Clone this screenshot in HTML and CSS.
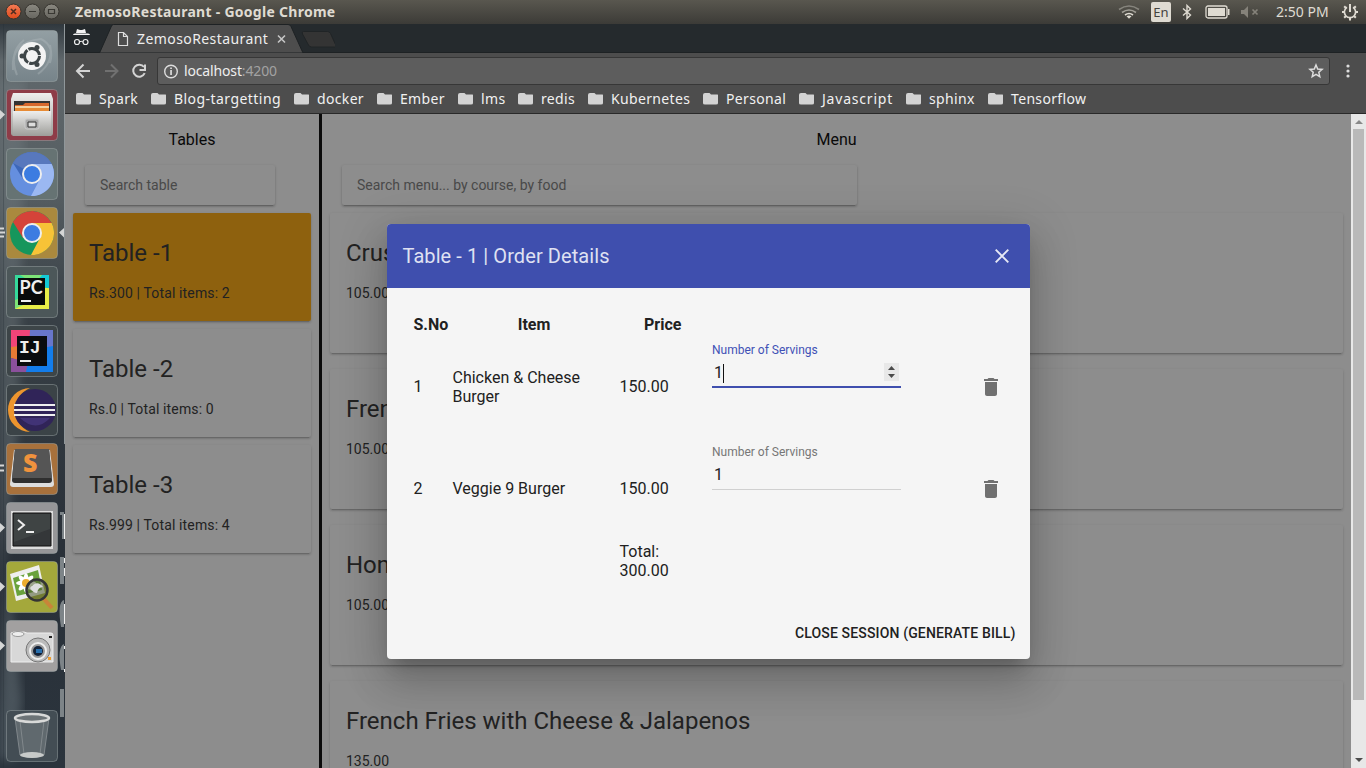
FILE: index.html
```html
<!DOCTYPE html>
<html lang="en">
<head>
<meta charset="utf-8">
<title>ZemosoRestaurant</title>
<link rel="stylesheet" href="styles.css">
</head>
<body>
<header class="system-bar">
  <svg class="window-buttons" width="65" height="24" viewBox="0 0 65 24">
    <defs><linearGradient id="red" x2="0" y2="1"><stop stop-color="#f47c55"/><stop offset="1" stop-color="#df4a1b"/></linearGradient><linearGradient id="gray" x2="0" y2="1"><stop stop-color="#8b8981"/><stop offset="1" stop-color="#66655f"/></linearGradient></defs>
    <circle cx="13.5" cy="11.5" r="7.500" fill="url(#red)" stroke="#35332e"/><circle cx="32.5" cy="11.5" r="7.500" fill="url(#gray)" stroke="#35332e"/><circle cx="51.5" cy="11.5" r="7.500" fill="url(#gray)" stroke="#35332e"/>
    <path d="m11 9 5 5m0-5-5 5" stroke="#502d20" stroke-width="1.6"/><path d="M29 11.5h7M48.5 9.5h6v4h-6z" stroke="#393833" stroke-width="1.2" fill="none"/>
  </svg>
  <span class="window-title">ZemosoRestaurant - Google Chrome</span>
  <div class="indicators">
    <svg width="22" height="24" viewBox="0 0 22 24" fill="none" stroke-width="1.6"><path d="M1 9.5q10-7 20 0" stroke="#86847d"/><path d="M4 12.5q7-5 14 0" stroke="#a09e96"/><path d="M7 15q4-3 8 0" stroke="#dfdbd2"/><path d="m8.500 16.200 2.500 2.500 2.500-2.500q-2.500-1.600-5 0" fill="#dfdbd2" stroke="none"/></svg>
    <span class="lang">En</span>
    <svg class="bluetooth" width="10" height="16" viewBox="0 0 10 16" fill="none" stroke="#dfdbd2" stroke-width="1.4"><path d="m1 4.500 7.500 6.500L5 14.500v-13L8.500 5 1 11.500"/></svg>
    <svg class="battery" width="25" height="14" viewBox="0 0 25 14"><rect x="1" y="1" width="21" height="12" rx="2" fill="none" stroke="#dfdbd2" stroke-width="1.3"/><path fill="#dfdbd2" d="M3 3h17v8H3zM23 4h1.500v6H23z"/></svg>
    <svg class="muted" width="18" height="14" viewBox="0 0 18 14" fill="#85827a"><path d="M0 5h3l4-4v12L3 9H0z"/><path d="m11.500 4.500 5 5m0-5-5 5" stroke="#85827a" stroke-width="1.700"/></svg>
    <span class="clock">2:50 PM</span>
    <svg class="power" width="18" height="18" viewBox="0 0 18 18" fill="none" stroke="#dfdbd2"><path d="M6 4.300a5.600 5.600 0 1 0 6 0" stroke-width="1.600"/><path d="M9 1v8" stroke-width="2"/><path d="M9 15v2.500M1 9h2.500M14.500 9H17M3.200 3.200l2 2M14.800 3.200l-2 2M3.200 14.800l2-2M14.800 14.800l-2-2" stroke-width="2"/></svg>
  </div>
</header>
<div class="workspace">
  <nav class="launcher">
    <svg class="wallpaper" width="65" height="744" viewBox="0 24 65 744">
      <defs><linearGradient id="wall" x2="0" y2="1"><stop stop-color="#30383e"/><stop offset=".05" stop-color="#60686c"/><stop offset=".23" stop-color="#555d61"/><stop offset=".38" stop-color="#394147"/><stop offset=".7" stop-color="#293038"/><stop offset="1" stop-color="#2b343d"/></linearGradient><filter id="blur"><feGaussianBlur stdDeviation="5"/></filter></defs>
      <path fill="url(#wall)" d="M0 24h65v744H0z"/><path d="M0 80h25L18 430 4 560 0 600z" fill="#768084" opacity=".4" filter="url(#blur)"/><path d="M7 570 22 700 15 760H0v-40z" fill="#78858b" opacity=".4" filter="url(#blur)"/>
      <path d="M3.500 24v744" stroke="#252e34" stroke-opacity=".3"/><path d="M64.500 24v420" stroke="#90979a"/><path d="M60 512h4v27h-2v-24h-2zM60 557h4v27h-4zM64 600q-7 2-3 27h3M64 644q-7 3-3 26h3M60 689h4v28h-4z" fill="#7d8488"/><path d="M64.500 514v25M64.500 558v5m0 5v8M64.500 604v20m0 22v3m0 20v3" stroke="#eee"/>
      <path d="m0 110 5 4.500-5 5zM0 523l5 4.500-5 5zM0 582l5 4.500-5 5zM0 641l5 4.500-5 5zM64 228l-5 4.500 5 5z" fill="#d5d6d6"/><path d="M0 228.500h4M0 232.500h5M0 236.500h4M0 465.500h4M0 470.500h4" stroke="#d5d6d6" stroke-width="2"/>
    </svg>
    <div class="tiles">
      <svg class="tile" viewBox="0 0 52 52"><defs><linearGradient id="glass" x2="0" y2="1"><stop stop-color="#939fa3"/><stop offset="1" stop-color="#77848a"/></linearGradient><linearGradient id="paper" x2="0" y2="1"><stop stop-color="#eee"/><stop offset="1" stop-color="#9d9d99"/></linearGradient></defs><rect class="plate" fill="url(#glass)" width="51" height="51" x=".5" y=".5" rx="4"/><path d="M7 40Q4 12 35 9q14 7 9 24M11 45q-9-22 7-35M44 15q4 17-12 29" fill="none" stroke="#b6c1c4" stroke-width="2" opacity=".35"/><circle cx="26" cy="26" r="14" fill="#f3f3f3"/><circle cx="26" cy="26" r="7.500" fill="none" stroke="#3e4547" stroke-width="3" stroke-dasharray="14.500 1.200"/><g fill="#3e4547"><circle cx="16" cy="26" r="2.500"/><circle cx="31" cy="17.500" r="2.500"/><circle cx="31" cy="34.500" r="2.500"/></g></svg>
      <svg class="tile" viewBox="0 0 52 52"><rect class="plate" fill="#8e3c48" width="51" height="51" x=".5" y=".5" rx="4"/><path d="M7 4h38l2 6v34q0 3-3 3H8q-3 0-3-3V10z" fill="url(#paper)"/><path d="M8 12h36v13H8z" fill="#333"/><path d="M9 16h8l2-2h24v8H9z" fill="#d7682d"/><path d="M9 17h34v3H9z" fill="#f4d2a1"/><path d="M9 19h34v3H9z" fill="#e78b36"/><path d="M7 22h38v25H7z" fill="url(#paper)"/><rect x="19" y="30" width="14" height="10" rx="2" fill="#aaa" stroke="#ccc"/><path d="M22 33h8v5h-8z" fill="#ddd" stroke="#333"/></svg>
      <svg class="tile" viewBox="0 0 52 52"><rect class="plate" fill="#667373" width="51" height="51" x=".5" y=".5" rx="4"/><circle cx="26" cy="26" r="22" fill="#658fdf"/><path d="M26 16H45.600A22 22 0 0 0 7 15L17 31z" fill="#3d67b9"/><path d="M26 16H45.600A22 22 0 0 1 25 48L34 31z" fill="#9bb8f2"/><path d="M7 15A22 22 0 0 1 45.600 16H26Q20 17 18 21z" fill="#5878bd"/><circle cx="26" cy="26" r="9" fill="#3c7ce1" stroke="#eee" stroke-width="2"/></svg>
      <svg class="tile" viewBox="0 0 52 52"><rect class="plate" fill="#aa893e" width="51" height="51" x=".5" y=".5" rx="4"/><circle cx="26" cy="26" r="22" fill="#16965c"/><path d="M26 16H45.600A22 22 0 0 0 7 15L17 31z" fill="#d54339"/><path d="M26 16H45.600A22 22 0 0 1 25 48L34 31z" fill="#f7c337"/><circle cx="26" cy="26" r="9" fill="#3c7ce1" stroke="#eee" stroke-width="2"/></svg>
      <svg class="tile" viewBox="0 0 52 52"><rect class="plate" fill="#4c5759" width="51" height="51" x=".5" y=".5" rx="4"/><path d="M9 9h34v34H9z" fill="#35d99b"/><path d="M14 9h29v8H27zM9 34l16-6v15H9z" fill="#7de477"/><path d="M36 9h7v14L31 15z" fill="#13c9d6"/><path d="M38 22h5v21H9l20-10z" fill="#e8ee47"/><path d="M12 12h27v27H12z" fill="#080b0b"/><text x="13.500" y="27.500" class="logo-pc">PC</text><path d="M15 34h10v2H15z" fill="#eee"/></svg>
      <svg class="tile" viewBox="0 0 52 52"><rect class="plate" fill="#3d4548" width="51" height="51" x=".5" y=".5" rx="4"/><path d="M5 5h23v15L5 25z" fill="#f04478"/><path d="M5 22l15-2v18L5 33z" fill="#e77b34"/><path d="M5 33l18 4v10H5z" fill="#8b509c"/><path d="M24 5h23v42L23 20z" fill="#6876ca"/><path d="M31 24l16-3v26H20l3-15z" fill="#137deb"/><path d="M11 11h30v30H11z" fill="#0a0c0e"/><text x="13" y="28" class="logo-ij">IJ</text><path d="M14 35h11v2H14z" fill="#eee"/></svg>
      <svg class="tile" viewBox="0 0 52 52"><rect class="plate" fill="#3b4347" width="51" height="51" x=".5" y=".5" rx="4"/><path d="M24 4A22 22 0 1 0 24 48Q10 42 10 26T24 4" fill="#ed952e"/><circle cx="29" cy="26" r="21" fill="#302458"/><path d="M8 21h41M8 26h41M8 31h41" stroke="#eee" stroke-width="2"/><path d="M14 34h30q-14 15-30 0" fill="#493b83" opacity=".7"/></svg>
      <svg class="tile" viewBox="0 0 52 52"><rect class="plate" fill="#a8713c" width="51" height="51" x=".5" y=".5" rx="4"/><path d="M8 7h36l4 34q0 3-3 3H7q-3 0-3-3z" fill="#ddd"/><path d="M9 6h34l3 31q0 3-3 3H9q-3 0-3-3z" fill="#2f2f2f"/><path d="M9 6h34l3 29H6z" fill="#555"/><text x="17" y="29" class="logo-s">S</text></svg>
      <svg class="tile" viewBox="0 0 52 52"><rect class="plate" fill="#969698" width="51" height="51" x=".5" y=".5" rx="4"/><path d="M5 9h42v38H5z" fill="#ddd"/><path d="M7 11h38v33H7z" fill="#343739" stroke="#111"/><path d="M8 12h36v15L8 40z" fill="#484c4d" opacity=".6"/><path d="m12 18 6 5-6 5M20 30h8" fill="none" stroke="#eee" stroke-width="2"/></svg>
      <svg class="tile" viewBox="0 0 52 52"><rect class="plate" fill="#a4a83b" width="51" height="51" x=".5" y=".5" rx="4"/><path d="m4 13 29-9 6 28-29 8z" fill="#eee"/><path d="m7 17 25-8 4 20-25 6z" fill="#69a23c"/><g fill="#fff"><ellipse cx="20" cy="22" rx="3" ry="10"/><ellipse cx="20" cy="22" rx="10" ry="3"/><ellipse cx="20" cy="22" rx="3" ry="10" transform="rotate(45 20 22)"/><ellipse cx="20" cy="22" rx="3" ry="10" transform="rotate(-45 20 22)"/></g><circle cx="20" cy="22" r="4" fill="#edac2e"/><path d="m37 37 9 10" stroke="#c98439" stroke-width="4"/><circle cx="31" cy="29" r="10.500" fill="#4b572c" fill-opacity=".55" stroke="#343434" stroke-width="2.500"/><path d="M24 27q7-9 13-1-5 0-6 6-4 0-7-5" fill="#ddd"/></svg>
      <svg class="tile" viewBox="0 0 52 52"><rect class="plate" fill="#a2a0a0" width="51" height="51" x=".5" y=".5" rx="4"/><path d="M8 12h10l3 1h24q2 0 2 2v27H5V13z" fill="#d8d8d8" stroke="#eee"/><ellipse cx="12" cy="14" rx="6" ry="2.500" fill="#eee" stroke="#999"/><circle cx="32" cy="30" r="12" fill="#bbb" stroke="#777"/><circle cx="32" cy="31" r="8" fill="#999" stroke="#eee" stroke-width="2"/><circle cx="32" cy="31" r="5" fill="#142238"/><path d="M30 29h6v4h-6z" fill="#286fad"/><path d="M43 16h3v2h-3z" fill="#222"/><path d="M42 37h3v3h-3z" fill="#ef9d2c"/></svg>
      <svg class="tile trash" viewBox="0 0 52 52"><rect class="plate" fill="#434d54" width="51" height="51" x=".5" y=".5" rx="4"/><path d="M9 8h34l-5 37q-12 5-24 0z" fill="#6d757a" opacity=".7" stroke="#999fa2"/><path d="M14 11 18 44M38 11l-4 33" stroke="#b1b5b7" opacity=".4"/><ellipse cx="26" cy="8" rx="17" ry="4" fill="#6c7376" stroke="#d8d9d8" stroke-width="2.500"/><ellipse cx="26" cy="45" rx="12" ry="3" fill="#c7cac9"/></svg>
    </div>
  </nav>
  <section class="browser">
    <div class="tab-strip">
      <svg width="270" height="29" viewBox="65 24 270 29"><path d="m99.500 53 12-27q.5-1.500 2-1.500H288q2 0 3 2L303 53z" fill="#4d4d4d" stroke="#1e2224"/><path d="M303.500 31.500h24q2 0 3 2l5 11q1 2.500-1 2.500h-23q-2 0-3-2l-6-11q-1-2.500 1-2.500" fill="#343434" stroke="#202426"/><g fill="#f3f3f3"><path d="m77 29 3 1 2 0 3-1 1 4H76zM73 35q0-1.500 2-1.500h13q2 0 2 1.500z"/></g><path d="M79.500 42q1.500-1.500 3.500 0" fill="none" stroke="#eee"/><circle cx="77" cy="42" r="2.500" fill="none" stroke="#eee" stroke-width="1.200"/><circle cx="85.500" cy="42" r="2.500" fill="none" stroke="#eee" stroke-width="1.200"/><path d="M118.500 32.500h5l4 4v9h-9zM123.500 32.500v4h4" fill="none" stroke="#ddd" stroke-width="1.200"/><path d="m278 35.500 7 7m0-7-7 7" stroke="#c5c5c5" stroke-width="1.600"/></svg>
      <span class="tab-title">ZemosoRestaurant</span>
    </div>
    <div class="toolbar">
      <svg class="nav-icons" width="92" height="36" viewBox="65 53 92 36" fill="none" stroke-width="2"><path d="M90 71H77.500m6-6.500L77 71l6.500 6.500" stroke="#d3d3d3"/><path d="M105 71h12m-6-6.500 6.500 6.500-6.500 6.500" stroke="#707070"/><path d="M144 67a6 6 0 1 0 .7 6.200M145 64.500v5.500h-5.500" stroke="#d3d3d3"/></svg>
      <div class="address"><svg width="15" height="15" viewBox="0 0 15 15"><circle cx="7" cy="7.500" r="6.300" fill="none" stroke="#ddd" stroke-width="1.400"/><path d="M6.200 6h1.700v5H6.200zM6.200 3.500h1.700v1.600H6.200z" fill="#ddd"/></svg><span class="url">localhost<span>:4200</span></span><svg class="star" width="16" height="16" viewBox="0 0 16 16"><path d="m8 2 1.700 4 4.400.4-3.300 2.900 1 4.300L8 11.300l-3.800 2.300 1-4.300-3.300-2.900 4.400-.4z" fill="none" stroke="#ddd" stroke-width="1.500"/></svg></div>
      <svg class="more" width="4" height="14" viewBox="0 0 4 14" fill="#ddd"><circle cx="2" cy="2" r="1.600"/><circle cx="2" cy="7" r="1.600"/><circle cx="2" cy="12" r="1.600"/></svg>
    </div>
    <div class="bookmarks">
      <a>Spark</a><a class="blog">Blog-targetting</a><a>docker</a><a>Ember</a><a>lms</a><a>redis</a><a>Kubernetes</a><a>Personal</a><a class="script">Javascript</a><a>sphinx</a><a>Tensorflow</a>
    </div>
    <main class="page">
      <section class="tables">
        <h2>Tables</h2><div class="search">Search table</div>
        <article class="card selected"><h3>Table -1</h3><p>Rs.300 | Total items: 2</p></article>
        <article class="card"><h3>Table -2</h3><p>Rs.0 | Total items: 0</p></article>
        <article class="card"><h3>Table -3</h3><p>Rs.999 | Total items: 4</p></article>
      </section>
      <section class="menu">
        <h2>Menu</h2><div class="search">Search menu... by course, by food</div>
        <article class="card"><h3>Crus</h3><p>105.00</p></article>
        <article class="card"><h3>Fren</h3><p>105.00</p></article>
        <article class="card"><h3>Hom</h3><p>105.00</p></article>
        <article class="card"><h3>French Fries with Cheese &amp; Jalapenos</h3><p>135.00</p></article>
      </section>
      <div class="scrollbar"><i class="scroll-up"></i><div class="thumb"></div><i class="scroll-down"></i></div>
    </main>
  </section>
</div>
<section class="dialog" role="dialog">
  <header class="dialog-header"><h1>Table - 1 | Order Details</h1><svg width="14" height="14" viewBox="0 0 14 14"><path d="m.7.700 12.600 12.600m0-12.600L.7 13.300" stroke="#e7e9f5" stroke-width="1.900"/></svg></header>
  <div class="orders">
    <strong>S.No</strong><strong class="center">Item</strong><strong class="center">Price</strong><span></span><span></span>
    <span>1</span><span class="two-line">Chicken &amp; Cheese<br>Burger</span><span>150.00</span>
    <label class="field focused">Number of Servings<span class="input">1<i class="caret"></i><svg class="spinner" width="15" height="18" viewBox="0 0 15 18"><path d="M0 0h15v18H0z" fill="#e8e8e8"/><path d="M4 7h7L7.500 3zM4 11h7l-3.500 4z" fill="#4a4a4a"/></svg></span></label>
    <svg class="delete" width="24" height="24" viewBox="0 0 24 24"><path d="M6 19c0 1.100.9 2 2 2h8c1.100 0 2-.9 2-2V7H6v12zM19 4h-3.500l-1-1h-5l-1 1H5v2h14V4z"/></svg>
    <span>2</span><span>Veggie 9 Burger</span><span>150.00</span><label class="field">Number of Servings<span class="input">1</span></label>
    <svg class="delete" width="24" height="24" viewBox="0 0 24 24"><path d="M6 19c0 1.100.9 2 2 2h8c1.100 0 2-.9 2-2V7H6v12zM19 4h-3.500l-1-1h-5l-1 1H5v2h14V4z"/></svg>
    <span class="total">Total:<br>300.00</span>
  </div>
  <button class="close-session">CLOSE SESSION (GENERATE BILL)</button>
</section>
</body>
</html>
```
FILE: styles.css
```css
* { box-sizing: border-box; }
body { margin: 0; width: 1366px; height: 768px; overflow: hidden; font-family: Roboto, sans-serif; }
svg { display: block; flex: none; }
h1, h2, h3, p { margin: 0; font-weight: 400; }
.system-bar { height: 24px; display: flex; align-items: center; background: linear-gradient(#59574f, #3c3b37); color: #dfdbd2; font-family: "Noto Sans", sans-serif; font-size: 14px; white-space: nowrap; }
.window-title { margin-left: 10px; padding-bottom: 2px; font-weight: 700; letter-spacing: .28px; }
.indicators { display: flex; align-items: center; margin-left: auto; padding-right: 7px; }
.lang { width: 20px; height: 20px; margin-left: 11px; border-radius: 2px; background: #dfdbd2; color: #45433e; text-align: center; line-height: 20px; font-size: 13px; }
.bluetooth { margin-left: 11px; }
.battery { margin-left: 13px; }
.muted { margin-left: 11px; }
.clock { width: 54px; margin-left: 17px; padding-bottom: 2px; }
.power { margin-left: 11px; }
.workspace { display: flex; height: 744px; }
.launcher { position: relative; width: 65px; flex: none; }
.wallpaper { position: absolute; inset: 0; }
.tiles { position: relative; display: flex; flex-direction: column; gap: 7px; padding: 6px; height: 100%; }
.tile { width: 52px; height: 52px; }
.plate { stroke: #a5adae; stroke-opacity: .45; }
.trash { margin-top: 31px; }
.logo-pc, .logo-ij, .logo-s { font: 700 17px Lato, sans-serif; fill: #eee; }
.logo-pc { font-size: 18px; }
.logo-ij { font: 700 18px "Liberation Mono", monospace; }
.logo-s { font: 800 25px "Open Sans", sans-serif; fill: #f0923d; }
.browser { display: flex; flex: 1; flex-direction: column; font-family: "Noto Sans", sans-serif; }
.tab-strip { height: 29px; display: flex; background: #252a2d; border-bottom: 1px solid #1e2224; }
.tab-title { width: 134px; margin-left: -198px; line-height: 30px; font-size: 14px; letter-spacing: .42px; color: #eee; white-space: nowrap; }
.toolbar { height: 36px; display: flex; align-items: center; background: #4d4d4d; }
.address { width: 1173px; height: 28px; display: flex; align-items: center; padding: 0 5px 0 6px; border: 1px solid #373737; border-radius: 3px; background: #5d5d5d; }
.url { margin-left: 5px; padding-bottom: 1px; color: #eee; font-size: 14px; letter-spacing: -.15px; }
.url span { color: #a2a2a2; }
.star { margin-left: auto; }
.more { margin-left: 16px; }
.bookmarks { height: 25px; display: grid; grid-template-columns: 75px 143px 83px 81px 60px 70px 115px 96px 107px 82px 110px; padding: 0 0 5px 11px; align-items: center; background: #4d4d4d; border-bottom: 1px solid #292929; color: #f1f1f1; font-size: 14px; letter-spacing: .34px; white-space: nowrap; }
.bookmarks a { display: flex; align-items: center; height: 20px; padding-bottom: 1px; }
.bookmarks .blog { letter-spacing: .45px; }
.bookmarks .script { letter-spacing: .8px; }
.bookmarks a::before { content: ""; width: 15px; height: 12px; margin-right: 8px; background: #d3d3d3; clip-path: polygon(0 0, 6px 0, 8px 2px, 100% 2px, 100% 100%, 0 100%); border-radius: 2px; }
.page { flex: 1; min-height: 0; display: flex; overflow: hidden; background: #8d8d8d; font-family: Roboto, sans-serif; color: #222; }
.tables { width: 257px; flex: none; padding: 16px 8px; border-right: 3px solid #0b0b0b; }
.menu { width: 1029px; flex: none; padding: 16px 8px; }
h2 { height: 19px; text-align: center; font-size: 16px; line-height: 19px; color: #090909; }
.search { height: 40px; margin: 16px 0 8px 12px; padding-left: 15px; border-radius: 2px; line-height: 40px; font-size: 14px; color: #494949; box-shadow: 0 3px 1px -2px #0002, 0 2px 2px #0001, 0 1px 3px #0003; }
.tables .search { width: 190px; }
.menu .search { width: 515px; }
.card { height: 108px; margin-bottom: 8px; padding: 24px 16px; border-radius: 2px; box-shadow: 0 3px 1px -2px #0002, 0 2px 2px #0001, 0 1px 3px #0002; }
.menu .card { height: 140px; margin-bottom: 16px; }
.card h3 { height: 32px; font-size: 24px; line-height: 32px; }
.card p { margin-top: 14px; font-size: 14px; line-height: 20px; }
.tables .card p { letter-spacing: .14px; }
.selected { background: #8e610e; }
.scrollbar { display: flex; flex-direction: column; align-items: center; width: 15px; background: #e8e8e8; }
.thumb { width: 11px; height: 571px; margin-top: 5px; background: #b9b9b9; }
.scroll-up { margin-top: 6px; border: 4px solid transparent; border-top: 0; border-bottom-color: #888; }
.scroll-down { margin: auto 0 6px; border: 4px solid transparent; border-bottom: 0; border-top-color: #4c4c4c; }
.dialog { position: absolute; left: 387px; top: 224px; width: 643px; height: 435px; display: flex; flex-direction: column; border-radius: 4px; overflow: hidden; background: #f5f5f5; color: #212121; box-shadow: 0 11px 15px -7px #0003, 0 24px 38px 3px #00000024, 0 9px 46px 8px #0000001f; }
.dialog-header { height: 64px; display: flex; align-items: center; justify-content: space-between; padding: 0 21.500px 0 15.500px; background: #3f4fae; }
h1 { font-size: 20px; line-height: 32px; letter-spacing: .08px; color: #dfe1f2; }
.orders { display: grid; grid-template: 21px 102px 102px 41px / 39px 167px 92.500px 189px 1fr; padding: 26px 27.500px 0 26.500px; align-items: center; font-size: 16px; line-height: 19px; }
.orders .center { text-align: center; }
.orders strong:nth-child(2) { padding-right: 4px; }
.orders strong:nth-child(3) { padding-right: 6px; }
.orders .two-line { padding-top: 2px; }
.field { display: flex; flex-direction: column; align-self: start; padding-top: 8px; height: 72px; font-size: 12px; line-height: 14px; color: #777; }
.input { display: flex; align-items: center; height: 31px; padding: 2px 2px 0; border-bottom: 1px solid #d0d0d0; font-size: 16px; color: #212121; }
.focused { color: #3f51b5; }
.focused .input { padding-top: 3px; border-bottom: 2px solid #3f4fae; }
.caret { width: 1px; height: 19px; background: #111; }
.spinner { margin: -2px 0 0 auto; }
.delete { justify-self: end; margin-top: 2px; fill: #707070; }
.total { grid-column: 3; align-self: end; }
.close-session { align-self: flex-end; margin: 43px 14.500px 0 0; padding: 0; border: 0; background: none; color: #212121; font: 500 14px/20px Roboto, sans-serif; letter-spacing: .15px; }
```
